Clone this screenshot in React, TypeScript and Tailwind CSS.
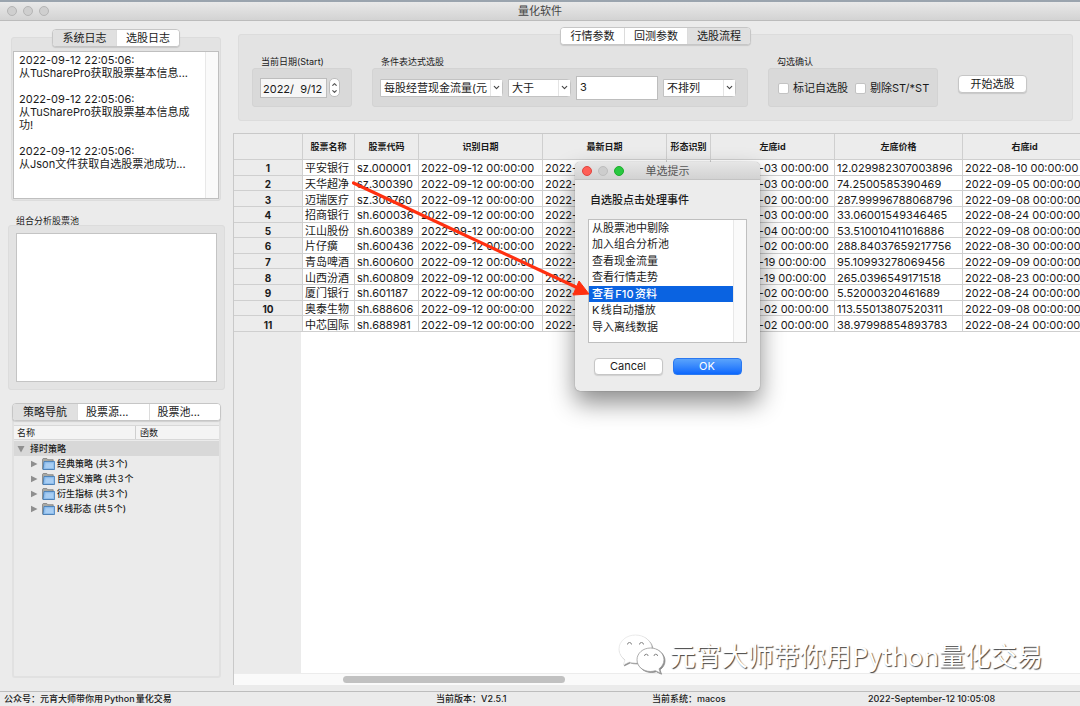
import { useState } from 'react';
import type { ReactNode } from 'react';
import clsx from 'clsx';
import { ChevronDown, ChevronUp } from 'lucide-react';

const LOG_TEXT = [
    '2022-09-12 22:05:06:',
    '从TuSharePro获取股票基本信息...',
    '',
    '2022-09-12 22:05:06:',
    '从TuSharePro获取股票基本信息成',
    '功!',
    '',
    '2022-09-12 22:05:06:',
    '从Json文件获取自选股票池成功...'
].join('\n');

const COLUMNS = [
    { title: '股票名称', width: 'w-[52px]' },
    { title: '股票代码', width: 'w-[64px]' },
    { title: '识别日期', width: 'w-[124px]' },
    { title: '最新日期', width: 'w-[124px]' },
    { title: '形态识别', width: 'w-[44px]' },
    { title: '左底id', width: 'w-[124px]' },
    { title: '左底价格', width: 'w-[128px]' },
    { title: '右底id', width: 'w-[124px]' }
];

const DAY = '2022-09-12 00:00:00';

const STOCKS = [
    ['平安银行', 'sz.000001', '2022-08-03 00:00:00', '12.029982307003896', '2022-08-10 00:00:00'],
    ['天华超净', 'sz.300390', '2022-08-03 00:00:00', '74.2500585390469', '2022-09-05 00:00:00'],
    ['迈瑞医疗', 'sz.300760', '2022-08-02 00:00:00', '287.99996788068796', '2022-09-08 00:00:00'],
    ['招商银行', 'sh.600036', '2022-08-03 00:00:00', '33.06001549346465', '2022-08-24 00:00:00'],
    ['江山股份', 'sh.600389', '2022-08-04 00:00:00', '53.510010411016886', '2022-09-08 00:00:00'],
    ['片仔癀', 'sh.600436', '2022-08-02 00:00:00', '288.84037659217756', '2022-08-30 00:00:00'],
    ['青岛啤酒', 'sh.600600', '2022-08-19 00:00:00', '95.10993278069456', '2022-09-09 00:00:00'],
    ['山西汾酒', 'sh.600809', '2022-08-19 00:00:00', '265.0396549171518', '2022-08-23 00:00:00'],
    ['厦门银行', 'sh.601187', '2022-08-02 00:00:00', '5.52000320461689', '2022-08-24 00:00:00'],
    ['奥泰生物', 'sh.688606', '2022-08-02 00:00:00', '113.55013807520311', '2022-09-08 00:00:00'],
    ['中芯国际', 'sh.688981', '2022-08-02 00:00:00', '38.97998854893783', '2022-08-24 00:00:00']
];

const TREE = ['经典策略 (共3个)', '自定义策略 (共3个', '衍生指标 (共3个)', 'K线形态 (共5个)'];

const ACTIONS = [
    '从股票池中剔除',
    '加入组合分析池',
    '查看现金流量',
    '查看行情走势',
    '查看F10资料',
    'K线自动播放',
    '导入离线数据'
];

const Tabs = ({ label, tabs, active, tabClass, className }: {
    label: string;
    tabs: string[];
    active: number;
    tabClass: string;
    className?: string;
}) => {
    const [current, setCurrent] = useState(active);

    return (
        <div
            role="tablist"
            aria-label={label}
            className={clsx('relative z-10 flex h-[18px] overflow-hidden rounded-[4px] border border-[#c6c6c6] bg-white shadow-[0_1px_1px_rgba(0,0,0,0.12)]', className)}>
            {tabs.map((tab, i) => (
                <button
                    key={tab}
                    type="button"
                    role="tab"
                    aria-selected={i === current}
                    onClick={() => setCurrent(i)}
                    className={clsx(
                        'border-l border-[#dcdcdc] text-[11px] leading-[14px] whitespace-nowrap first:border-l-0',
                        tabClass,
                        i === current ? 'bg-[#e0e0e0]' : 'bg-white'
                    )}>
                    {tab}
                </button>
            ))}
        </div>
    );
};

const Group = ({ title, className, children }: { title: string; className: string; children: ReactNode }) => (
    <fieldset className={clsx('shrink-0', className)}>
        <legend className="block pl-[9px] text-[9px] leading-3">{title}</legend>
        <div className="flex h-[39px] items-center rounded-[3px] border border-[#d3d3d3] bg-[#d9d9d9] px-[7px]">
            {children}
        </div>
    </fieldset>
);

const Select = ({ label, value, className }: { label: string; value: string; className: string }) => (
    <div className={clsx('relative flex h-[18px]', className)}>
        <select
            aria-label={label}
            className="block h-[18px] w-full appearance-none rounded-r-[4px] border border-[#c2c2c2] bg-white py-0 pr-3 pl-[3px] text-[11px] leading-4 outline-none">
            <option>{value}</option>
        </select>
        <span className="pointer-events-none absolute inset-y-px right-px flex w-3 items-center justify-center border-l border-[#e4e4e4] bg-white">
            <ChevronDown className="size-[9px]" strokeWidth={3} color="#444" />
        </span>
    </div>
);

const CheckBox = ({ label }: { label: string }) => (
    <label className="flex items-center gap-1 text-[11px] whitespace-nowrap">
        <input
            type="checkbox"
            className="size-[11px] appearance-none rounded-[2px] border border-[#c3c3c3] bg-white checked:bg-[#0a60ff]"
        />
        {label}
    </label>
);

const FolderIcon = () => (
    <svg viewBox="0 0 13 12" className="h-3 w-[13px]" aria-hidden="true">
        <path d="M.5 11V1.2L1.2.5h3.6l1 1.2h5.4v9.8H1z" fill="#a9a9a3" stroke="#777" strokeWidth=".7" />
        <path d="M2 3.5h10.6v8H1z" fill="#8dbdec" stroke="#3f78b5" strokeWidth=".8" />
        <path d="M3.6 5.2h7.6v4.8H3.2z" fill="#a9cef3" />
    </svg>
);

const Branch = ({ open }: { open?: boolean }) => (
    <svg viewBox="0 0 8 8" className="size-2" aria-hidden="true">
        <path d={open ? 'M.5 1h7L4 7.500z' : 'M1 .8l6.500 3.200L1 7.200z'} fill="#8f8f8f" />
    </svg>
);

const Sidebar = () => (
    <aside className="flex w-[225px] shrink-0 flex-col">
        <section className="pt-2 pr-1 pl-[11px]">
            <div className="flex justify-center">
                <Tabs label="日志" tabs={['系统日志', '选股日志']} active={0} tabClass="w-[63px]" />
            </div>
            <div className="-mt-[10px] rounded-[3px] border border-[#dcdcdc] bg-[#e3e3e3] px-px pt-[13px] pb-px">
                <div className="flex h-[148px] border border-[#bfbfbf] bg-white">
                    <textarea
                        readOnly
                        aria-label="系统日志"
                        value={LOG_TEXT}
                        className="min-w-0 flex-1 resize-none overflow-hidden pt-[2px] pl-[5px] text-[11px] leading-[13px] whitespace-pre outline-none"
                    />
                    <div className="w-[13px] border-l border-[#e8e8e8] bg-[#fafafa]" />
                </div>
            </div>
        </section>

        <section className="mt-3 pl-2">
            <h2 className="pt-1 pl-2 text-[9px] leading-[8px]">组合分析股票池</h2>
            <div className="h-[165px] rounded-[3px] border border-[#dcdcdc] bg-[#e3e3e3] p-[7px]">
                <div className="h-full border border-[#c4c4c4] bg-white" />
            </div>
        </section>

        <section className="mt-[13px] mb-[13px] flex min-h-0 flex-1 flex-col pr-1 pl-3">
            <Tabs
                label="策略"
                tabs={['策略导航', '股票源...', '股票池...']}
                active={0}
                tabClass="flex-1 pl-2 text-left first:w-16 first:flex-none first:pl-[10px]"
            />
            <div className="-mt-[10px] flex-1 rounded-[3px] border-2 border-[#e1e1e1] pt-3">
                <div className="flex h-[15px] border-y border-[#d8d8d8] bg-[#f4f4f4] text-[9px] leading-[14px]">
                    <span className="w-[122px] border-r border-[#cfcfcf] pl-[3px]">名称</span>
                    <span className="pl-1">函数</span>
                </div>
                <ul className="mt-px text-[9px] leading-[15px] font-medium [text-autospace:normal]">
                    <li className="flex items-center gap-[5px] bg-[#d8d8d8] pl-[3px]">
                        <Branch open />
                        择时策略
                    </li>
                    {TREE.map(item => (
                        <li key={item} className="flex items-center pl-4 whitespace-nowrap">
                            <Branch />
                            <span className="mr-[2px] ml-1"><FolderIcon /></span>
                            {item}
                        </li>
                    ))}
                </ul>
            </div>
        </section>
    </aside>
);

const FilterPanel = () => (
    <section className="mr-[7px] ml-[5px] pt-[6px]">
        <div className="flex justify-center">
            <Tabs label="参数" tabs={['行情参数', '回测参数', '选股流程']} active={2} tabClass="w-[63px]" />
        </div>
        <div className="-mt-[11px] flex h-[87px] items-start gap-5 rounded-[3px] border border-[#dcdcdc] bg-[#e3e3e3] pt-[21px] pl-[13px]">
            <Group title="当前日期(Start)" className="w-[100px]">
                <input
                    type="text"
                    aria-label="当前日期"
                    defaultValue="2022/  9/12"
                    className="h-5 w-[67px] border border-[#bdbdbd] bg-[#f6f6f6] pt-[2px] pl-[2px] text-[11px] outline-none"
                />
                <span className="ml-[2px] flex h-[19px] w-[11px] flex-col items-center justify-center rounded-[5px] border border-[#bdbdbd] bg-white">
                    <button type="button" aria-label="增加"><ChevronUp className="size-[7px]" strokeWidth={4} color="#555" /></button>
                    <button type="button" aria-label="减少"><ChevronDown className="size-[7px]" strokeWidth={4} color="#555" /></button>
                </span>
            </Group>

            <Group title="条件表达式选股" className="w-[376px]">
                <div className="flex items-center gap-[5px]">
                    <Select label="指标" value="每股经营现金流量(元" className="w-[123px]" />
                    <Select label="比较" value="大于" className="w-[63px]" />
                    <input
                        type="text"
                        aria-label="阈值"
                        defaultValue="3"
                        className="h-6 w-[82px] border border-[#bdbdbd] bg-white pb-[2px] pl-[3px] text-[11px] outline-none"
                    />
                    <Select label="排序" value="不排列" className="w-[73px]" />
                </div>
            </Group>

            <Group title="勾选确认" className="w-[170px]">
                <div className="flex gap-[7px] pt-[2px] pl-[2px]">
                    <CheckBox label="标记自选股" />
                    <CheckBox label="剔除ST/*ST" />
                </div>
            </Group>

            <button
                type="button"
                className="mt-[19px] h-[18px] w-[69px] rounded-[4px] border border-[#c6c6c6] bg-white text-[11px] leading-[14px] shadow-[0_1px_1px_rgba(0,0,0,0.12)]">
                开始选股
            </button>
        </div>
    </section>
);

const StockTable = () => (
    <section className="mt-3 mb-[6px] flex min-h-0 flex-1 flex-col overflow-hidden border-t border-l border-[#c9c9c9]">
        <table className="h-[198px] w-[853px] table-fixed border-separate border-spacing-0 text-[11px] leading-3">
            <thead>
                <tr className="h-[26px]">
                    <th className="w-[69px] border-r border-b border-[#cfcfcf] bg-[#ececec]" />
                    {COLUMNS.map(column => (
                        <th
                            key={column.title}
                            scope="col"
                            className={clsx('overflow-hidden border-r border-b border-[#cfcfcf] bg-[#ececec] p-0 text-[9px] font-bold whitespace-nowrap', column.width)}>
                            {column.title}
                        </th>
                    ))}
                </tr>
            </thead>
            <tbody>
                {STOCKS.map(([name, code, leftId, price, rightId], i) => (
                    <tr key={code}>
                        <th scope="row" className="border-r border-b border-[#cfcfcf] bg-[#ececec] p-0 pt-[2px] text-[10px] font-bold">
                            {i + 1}
                        </th>
                        {[name, code, DAY, DAY, '', leftId, price, rightId].map((value, col) => (
                            <td
                                key={col}
                                className="overflow-hidden border-r border-b border-[#cfcfcf] bg-white p-0 pt-[2px] pl-[2px] whitespace-nowrap">
                                {value}
                            </td>
                        ))}
                    </tr>
                ))}
            </tbody>
        </table>
        <div className="flex flex-1">
            <div className="w-[67px] bg-[#ebebeb]" />
            <div className="flex-1 bg-white" />
        </div>
        <div className="flex h-3 items-center border-t border-[#ececec] bg-[#fafafa] pl-[109px]">
            <div className="h-[7px] w-[222px] rounded-full bg-[#c1c1c1]" />
        </div>
    </section>
);

const ActionDialog = () => {
    const [selected, setSelected] = useState(4);

    return (
        <div
            role="dialog"
            aria-label="单选提示"
            className="absolute top-40 left-[575px] z-20 w-[185px] rounded-[5px] bg-[#ececec] pb-4 shadow-[0_0_1px_rgba(0,0,0,0.5),0_12px_24px_rgba(0,0,0,0.45)]">
            <header className="relative flex h-[18px] items-center justify-center rounded-t-[5px] border-b border-[#c3c3c3] bg-linear-to-b from-[#e6e6e6] to-[#d2d2d2]">
                <div className="absolute left-[7px] flex gap-[6px]">
                    <span className="size-[10px] rounded-full border border-[#e0443e] bg-[#ff5f57]" />
                    <span className="size-[10px] rounded-full border border-[#bdbdbd] bg-[#cdcdcd]" />
                    <span className="size-[10px] rounded-full border border-[#1dad2b] bg-[#28c840]" />
                </div>
                <h2 className="text-[11px] leading-4 text-[#555]">单选提示</h2>
            </header>
            <p className="mt-3 pl-[15px] text-[11px] leading-4 font-medium">自选股点击处理事件</p>
            <div className="mx-[13px] mt-[11px] flex h-[124px] border border-[#bfbfbf] bg-white">
                <ul role="listbox" aria-label="自选股点击处理事件" className="flex h-[115px] flex-1 flex-col [text-autospace:normal]">
                    {ACTIONS.map((action, i) => (
                        <li
                            key={action}
                            role="option"
                            aria-selected={i === selected}
                            onClick={() => setSelected(i)}
                            className={clsx(
                                'flex-1 pl-[3px] text-[11px] leading-4',
                                i === selected && 'bg-[#0a63e1] font-medium text-white'
                            )}>
                            {action}
                        </li>
                    ))}
                </ul>
                <div className="w-[13px] border-l border-[#e8e8e8] bg-[#fafafa]" />
            </div>
            <div className="mt-[15px] flex justify-center gap-[10px] text-[11px] leading-[15px]">
                <button type="button" className="h-[17px] w-[69px] rounded-[4px] border border-[#c6c6c6] bg-white shadow-[0_1px_1px_rgba(0,0,0,0.12)]">
                    Cancel
                </button>
                <button type="button" className="h-[17px] w-[69px] rounded-[4px] border border-[#2a78f0] bg-linear-to-b from-[#5aa3fb] to-[#0a67fd] text-white">
                    OK
                </button>
            </div>
        </div>
    );
};

const Arrow = () => (
    <svg viewBox="0 0 240 116" className="pointer-events-none absolute top-[179px] left-[352px] z-30 h-[116px] w-[240px]" aria-hidden="true">
        <path d="M1.500 2L226 107" stroke="#ff3010" strokeWidth="3.2" strokeLinecap="round" />
        <path d="M237 113L227 100l-6 14z" fill="#ff3010" stroke="#ff3010" strokeWidth="1" strokeLinejoin="round" />
    </svg>
);

const Watermark = () => (
    <div className="pointer-events-none absolute right-[37px] bottom-[30px] z-10 flex items-center gap-1 text-white">
        <svg viewBox="0 0 48 42" className="h-[42px] w-12 [filter:drop-shadow(1px_1px_0_#8a8a8a)]" aria-hidden="true">
            <path d="M17.500 1C8.400 1 1 7.200 1 15c0 4.400 2.400 8.300 6 10.900L5.300 31l6-3c2 .6 4 1 6.200 1C26.600 29 34 22.800 34 15S26.600 1 17.500 1z" fill="#fff" stroke="#ddd" strokeWidth=".6" />
            <path d="M32.500 14C25 14 19 19.200 19 25.800S25 37.500 32.500 37.500c1.700 0 3.300-.3 4.800-.8l5.200 2.500-1.500-4.400c3-2.100 5-5.300 5-9C46 19.200 40 14 32.500 14z" fill="#fff" stroke="#999" strokeWidth=".8" />
            <path d="M9.500 10.500a2 2 0 0 1 4 0M21.500 10.500a2 2 0 0 1 4 0M26.500 22a1.800 1.800 0 0 1 3.600 0M36 22a1.800 1.800 0 0 1 3.600 0" fill="none" stroke="#888" strokeWidth="1" />
        </svg>
        <span className="font-['Noto_Sans_CJK_SC',sans-serif] text-[26px] leading-9 whitespace-nowrap [text-shadow:1px_1px_1px_#444]">
            元宵大师带你用Python量化交易
        </span>
    </div>
);

export default function App() {
    return (
        <div className="relative flex h-screen flex-col overflow-hidden border-t-2 border-[#9aa4ae] bg-[#ebebeb] font-[Inter,'Noto_Sans_CJK_SC',sans-serif] text-[#1a1a1a]">
            <header className="relative flex h-[19px] shrink-0 items-center justify-center border-b border-[#bcbcbc] bg-linear-to-b from-[#e9e9e9] to-[#d3d3d3]">
                <div className="absolute left-[7px] flex gap-[6px]">
                    <span className="size-[10px] rounded-full border border-[#b5b5b5] bg-[#cfcfcf]" />
                    <span className="size-[10px] rounded-full border border-[#b5b5b5] bg-[#cfcfcf]" />
                    <span className="size-[10px] rounded-full border border-[#b5b5b5] bg-[#cfcfcf]" />
                </div>
                <h1 className="text-[11px] leading-4 text-[#444]">量化软件</h1>
            </header>

            <div className="flex min-h-0 flex-1 gap-2">
                <Sidebar />
                <main className="flex min-w-0 flex-1 flex-col">
                    <FilterPanel />
                    <StockTable />
                </main>
            </div>

            <footer className="grid h-[15px] shrink-0 grid-cols-5 border-t border-[#bdbdbd] text-[9px] leading-[13px] font-medium whitespace-nowrap [text-autospace:normal] *:pl-1">
                <span>公众号：元宵大师带你用Python量化交易</span>
                <span className="col-start-3">当前版本：V2.5.1</span>
                <span>当前系统：macos</span>
                <span>2022-September-12 10:05:08</span>
            </footer>

            <ActionDialog />
            <Arrow />
            <Watermark />
        </div>
    );
}
